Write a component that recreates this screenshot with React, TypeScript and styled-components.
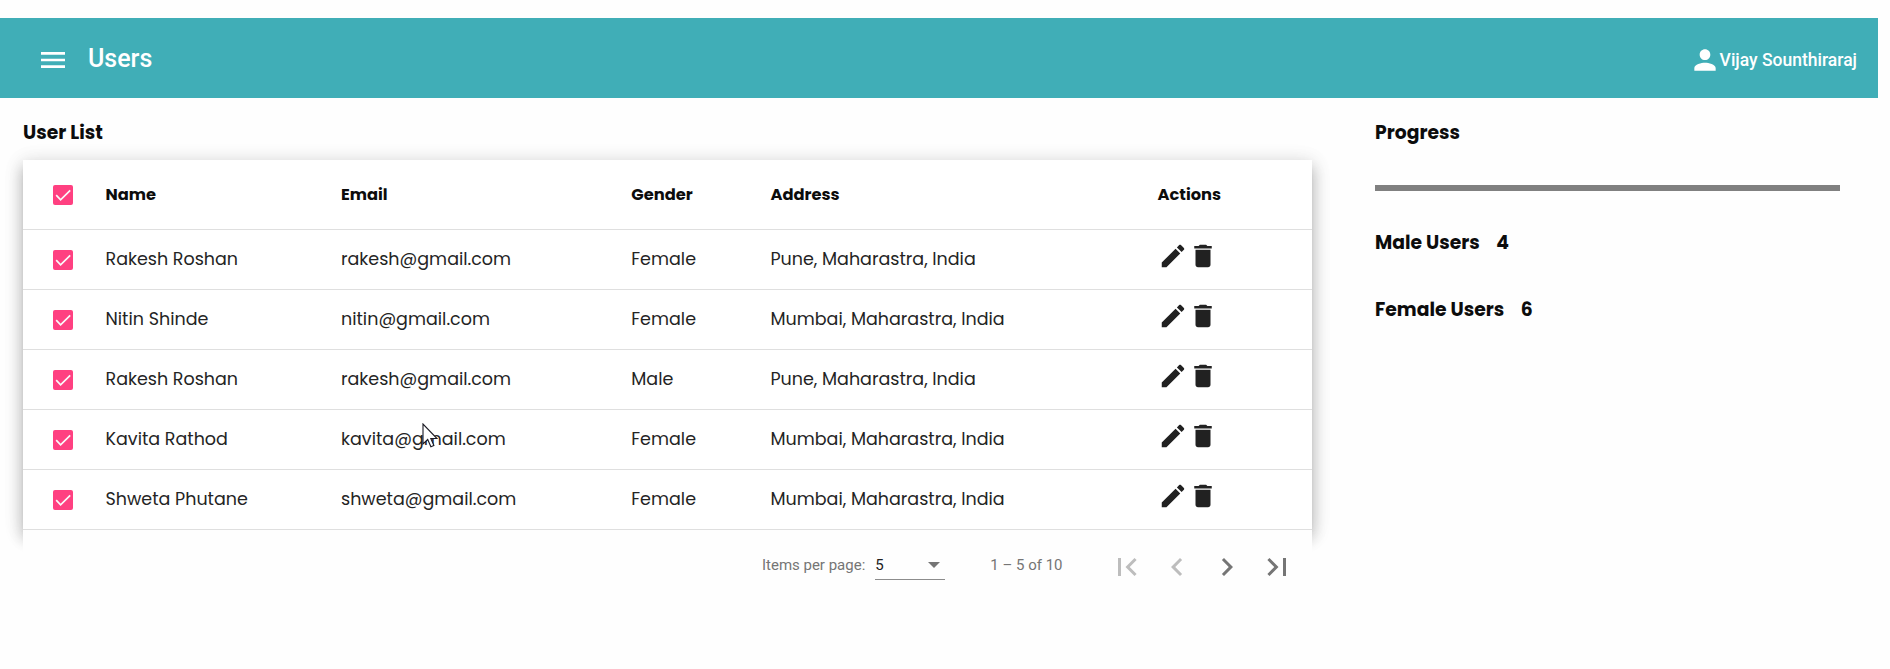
import React from "react";
import styled, { createGlobalStyle } from "styled-components";

const GlobalStyle = createGlobalStyle`
  body {
    margin: 0;
    background: #fefefe;
    color: rgba(0, 0, 0, 0.87);
    font-family: Poppins, Inter, sans-serif;
  }
`;

const Page = styled.div`
  min-height: 651px;
  padding: 18px 12px 0 0;
`;

const Toolbar = styled.header`
  display: flex;
  align-items: center;
  height: 80px;
  padding: 4px 21px 0 37px;
  box-sizing: border-box;
  background: #40aeb7;
  color: #fff;
  font-family: Roboto, sans-serif;
`;

const PageTitle = styled.h1`
  flex: 1;
  margin: 0 0 3px 19px;
  font-size: 25px;
  font-weight: 500;
  line-height: 32px;
`;

const UserInfo = styled.div`
  display: flex;
  align-items: center;
  font-size: 17.5px;
  font-weight: 500;
  line-height: 24px;

  svg {
    margin-right: -1px;
  }
`;

const Icon = styled.svg<{ $size: number }>`
  display: block;
  flex: none;
  width: ${(p) => p.$size}px;
  height: ${(p) => p.$size}px;
  fill: currentColor;
`;

const Content = styled.main`
  display: grid;
  grid-template-columns: 1289px 465px;
  column-gap: 63px;
  padding: 20px 0 0 23px;
`;

const Heading = styled.h2`
  margin: 0;
  color: #0c0c0c;
  font-size: 18.75px;
  font-weight: 700;
  line-height: 30px;
`;

const Table = styled.div`
  margin-top: 12px;
  background: #fff;
  box-shadow: 0 6px 6px -4px rgba(0, 0, 0, 0.2),
    0 10px 12.5px 1px rgba(0, 0, 0, 0.14), 0 4px 17.5px 2.5px rgba(0, 0, 0, 0.12),
    0 2px 22px 1px rgba(0, 0, 0, 0.06);
`;

const Row = styled.div<{ $header?: boolean }>`
  display: grid;
  grid-template-columns: 82.5px 235.5px 290.3px 139.2px 387px 1fr;
  align-items: center;
  height: ${(p) => (p.$header ? 70 : 60)}px;
  box-sizing: border-box;
  border-bottom: 1px solid #dfdfdf;
  color: ${(p) => (p.$header ? "#0c0c0c" : "#242424")};
  font-size: ${(p) => (p.$header ? 16.25 : 17.5)}px;
  font-weight: ${(p) => (p.$header ? 700 : 400)};
  line-height: 26px;
  white-space: nowrap;
`;

const Cell = styled.span<{ $header?: boolean }>`
  padding-bottom: ${(p) => (p.$header ? 0 : 2)}px;
`;

const Checkbox = styled.span`
  display: flex;
  width: 20px;
  height: 20px;
  margin: 1px 0 0 30px;
  border-radius: 2px;
  background: #ff4081;
`;

const CheckMark = styled.svg`
  width: 20px;
  height: 20px;
  fill: none;
  stroke: #fafafa;
  stroke-width: 1.7;
`;

const Actions = styled.div`
  display: flex;
  padding: 0 0 7px 1px;
  color: #212121;
`;

const Paginator = styled.div`
  position: relative;
  display: flex;
  align-items: center;
  justify-content: flex-end;
  height: 70px;
  padding-right: 10px;
  background: #fefefe;
  color: #757575;
  font-family: Roboto, sans-serif;
  font-size: 15px;
  line-height: 20px;
`;

const PageSize = styled.div`
  display: flex;
  align-items: center;
  justify-content: space-between;
  width: 70px;
  height: 30px;
  margin: 0 45px 0 10px;
  padding: 0 5px 0 0;
  box-sizing: border-box;
  border-bottom: 1px solid #8c8c8c;
  color: #212121;
`;

const Caret = styled.span`
  border: 6px solid transparent;
  border-top-color: #757575;
  border-bottom-width: 0;
`;

const RangeLabel = styled.span`
  margin-right: 39.5px;
`;

const PageButton = styled.button`
  display: flex;
  align-items: center;
  justify-content: center;
  width: 50px;
  height: 50px;
  margin-top: 3px;
  padding: 0;
  border: 0;
  background: none;
  color: #757575;

  &:disabled {
    color: #bdbdbd;
  }
`;

const ProgressBar = styled.div`
  height: 6px;
  margin: 37px 0;
  background: #808080;
`;

const Stat = styled(Heading)`
  display: flex;
  gap: 16.5px;
  margin-bottom: 37px;
`;

const Cursor = styled.svg`
  position: absolute;
  left: 422px;
  top: 423px;
  width: 16px;
  height: 26px;
  fill: #fff;
  stroke: #1a1a24;
  stroke-width: 1.1;
`;

const icons = {
  menu: "M3 18h18v-2H3v2zm0-5h18v-2H3v2zm0-7v2h18V6H3z",
  person:
    "M12 12c2.21 0 4-1.79 4-4s-1.79-4-4-4-4 1.79-4 4 1.79 4 4 4zm0 2c-2.67 0-8 1.34-8 4v2h16v-2c0-2.66-5.33-4-8-4z",
  edit: "M3 17.25V21h3.75L17.81 9.94l-3.75-3.75L3 17.25zM20.71 7.04c.39-.39.39-1.02 0-1.41l-2.34-2.34c-.39-.39-1.02-.39-1.41 0l-1.83 1.83 3.75 3.75 1.83-1.83z",
  remove:
    "M6 19c0 1.1.9 2 2 2h8c1.1 0 2-.9 2-2V7H6v12zM19 4h-3.5l-1-1h-5l-1 1H5v2h14V4z",
  first: "M18.41 16.59L13.82 12l4.59-4.59L17 6l-6 6 6 6zM6 6h2v12H6z",
  previous: "M15.41 7.41L14 6l-6 6 6 6 1.41-1.41L10.83 12z",
  next: "M10 6L8.59 7.41 13.17 12l-4.58 4.59L10 18l6-6z",
  last: "M5.59 7.41L10.18 12l-4.59 4.59L7 18l6-6-6-6zM16 6h2v12h-2z",
};

function Glyph({ name, size }: { name: keyof typeof icons; size: number }) {
  return (
    <Icon $size={size} viewBox="0 0 24 24" aria-hidden>
      <path d={icons[name]} />
    </Icon>
  );
}

function Checked() {
  return (
    <Checkbox role="checkbox" aria-checked>
      <CheckMark viewBox="0 0 20 20">
        <path d="M3.2 10.2 7.6 14.8 17.2 5.4" />
      </CheckMark>
    </Checkbox>
  );
}

const columns = ["Name", "Email", "Gender", "Address", "Actions"];

const users = [
  ["Rakesh Roshan", "rakesh@gmail.com", "Female", "Pune, Maharastra, India"],
  ["Nitin Shinde", "nitin@gmail.com", "Female", "Mumbai, Maharastra, India"],
  ["Rakesh Roshan", "rakesh@gmail.com", "Male", "Pune, Maharastra, India"],
  ["Kavita Rathod", "kavita@gmail.com", "Female", "Mumbai, Maharastra, India"],
  ["Shweta Phutane", "shweta@gmail.com", "Female", "Mumbai, Maharastra, India"],
];

export default function App() {
  return (
    <Page>
      <GlobalStyle />
      <Toolbar>
        <Glyph name="menu" size={32} />
        <PageTitle>Users</PageTitle>
        <UserInfo>
          <Glyph name="person" size={32} />
          Vijay Sounthiraraj
        </UserInfo>
      </Toolbar>
      <Content>
        <section>
          <Heading>User List</Heading>
          <Table>
            <Row $header>
              <Checked />
              {columns.map((label) => (
                <Cell key={label} $header>
                  {label}
                </Cell>
              ))}
            </Row>
            {users.map((cells, i) => (
              <Row key={i}>
                <Checked />
                {cells.map((text) => (
                  <Cell key={text}>{text}</Cell>
                ))}
                <Actions>
                  <Glyph name="edit" size={30} />
                  <Glyph name="remove" size={30} />
                </Actions>
              </Row>
            ))}
          </Table>
          <Paginator>
            <span>Items per page:</span>
            <PageSize>
              5
              <Caret />
            </PageSize>
            <RangeLabel>1 – 5 of 10</RangeLabel>
            <PageButton disabled>
              <Glyph name="first" size={36} />
            </PageButton>
            <PageButton disabled>
              <Glyph name="previous" size={36} />
            </PageButton>
            <PageButton>
              <Glyph name="next" size={36} />
            </PageButton>
            <PageButton>
              <Glyph name="last" size={36} />
            </PageButton>
          </Paginator>
        </section>
        <aside>
          <Heading>Progress</Heading>
          <ProgressBar />
          <Stat>
            <span>Male Users</span>
            <span>4</span>
          </Stat>
          <Stat>
            <span>Female Users</span>
            <span>6</span>
          </Stat>
        </aside>
      </Content>
      <Cursor viewBox="0 0 16 26">
        <path d="M1 1v20l4.7-4.5 3.2 7.3 3-1.3-3.1-7h6.2z" />
      </Cursor>
    </Page>
  );
}
